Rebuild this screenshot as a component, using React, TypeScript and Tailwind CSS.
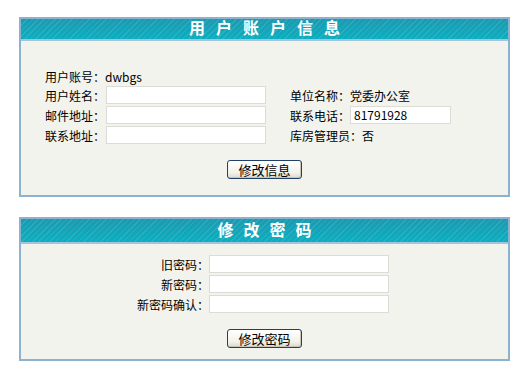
import React from 'react';

const font = "font-['Noto_Sans_CJK_SC','Noto_Sans',sans-serif]";

const PanelHeader: React.FC<{ title: string; tall?: boolean; spacing: string }> = ({ title, tall, spacing }) => (
  <div
    className={`${tall ? 'h-[25px]' : 'h-[22px]'} flex items-center justify-center pb-[4px] border-b-2 border-[#a3c4da] bg-[image:repeating-linear-gradient(135deg,rgba(255,255,255,0.1)_0px,rgba(255,255,255,0.1)_1px,transparent_1px,transparent_4px),linear-gradient(#1b9ab0,#0caec0)]`}
  >
    <span className={`text-white font-bold text-[16px] leading-none ${spacing}`}>{title}</span>
  </div>
);

const Field: React.FC<{ w: string; value?: string }> = ({ w, value }) => (
  <input
    readOnly
    value={value ?? ''}
    className={`${w} shrink-0 h-[18px] bg-white border border-[#dcdcd6] px-[3px] text-[12px] text-black outline-none`}
  />
);

const Btn: React.FC<{ label: string }> = ({ label }) => (
  <button className="mx-auto block w-[75px] h-[19px] rounded-[3px] border border-[#20406a] bg-[linear-gradient(#ffffff,#f2f1ea_70%,#dcd9cc)] text-[13px] leading-none text-black shadow-[inset_-1px_-1px_0_#c8c5b8]">
    {label}
  </button>
);

const Label: React.FC<{ text: string; w: string; right?: boolean }> = ({ text, w, right }) => (
  <span className={`${w} shrink-0 whitespace-nowrap pt-[2px] ${right ? 'text-right' : ''}`}>{text}</span>
);

export default function App() {
  return (
    <div className={`w-[518px] h-[374px] bg-white pt-[17px] pl-[19px] text-[12px] text-black ${font}`}>
      {/* 用户账户信息 */}
      <div className="w-[491px] border-2 border-[#8db2cf] bg-[#f3f3ed]">
        <PanelHeader title="用户账户信息" spacing="tracking-[11px] pl-[11px]" />
        <div className="pt-[24px] pb-[16px] pl-[24px]">
          <div className="grid grid-cols-[245px_1fr] whitespace-nowrap">
            <div className="h-[20px] flex items-center pt-[3px]">用户账号：dwbgs</div>
            <div className="h-[20px]" />
            <div className="h-[20px] flex items-center">
              <Label text="用户姓名：" w="w-[61px]" />
              <Field w="w-[160px]" />
            </div>
            <div className="h-[20px] flex items-center pt-[2px]">单位名称：党委办公室</div>
            <div className="h-[20px] flex items-center">
              <Label text="邮件地址：" w="w-[61px]" />
              <Field w="w-[160px]" />
            </div>
            <div className="h-[20px] flex items-center">
              <Label text="联系电话：" w="w-[60px]" />
              <Field w="w-[101px]" value="81791928" />
            </div>
            <div className="h-[20px] flex items-center">
              <Label text="联系地址：" w="w-[61px]" />
              <Field w="w-[160px]" />
            </div>
            <div className="h-[20px] flex items-center pt-[2px]">库房管理员：否</div>
          </div>
          <div className="mt-[15px] -ml-[24px]">
            <Btn label="修改信息" />
          </div>
        </div>
      </div>

      {/* 修改密码 */}
      <div className="mt-[20px] w-[491px] border-2 border-[#8db2cf] bg-[#f3f3ed]">
        <PanelHeader title="修改密码" tall spacing="tracking-[10px] pl-[10px]" />
        <div className="pt-[10px] pb-[11px]">
          {['旧密码：', '新密码：', '新密码确认：'].map((l) => (
            <div key={l} className="h-[20px] flex items-center">
              <Label text={l} w="w-[188px]" right />
              <Field w="w-[180px]" />
            </div>
          ))}
          <div className="mt-[15px]">
            <Btn label="修改密码" />
          </div>
        </div>
      </div>
    </div>
  );
}
